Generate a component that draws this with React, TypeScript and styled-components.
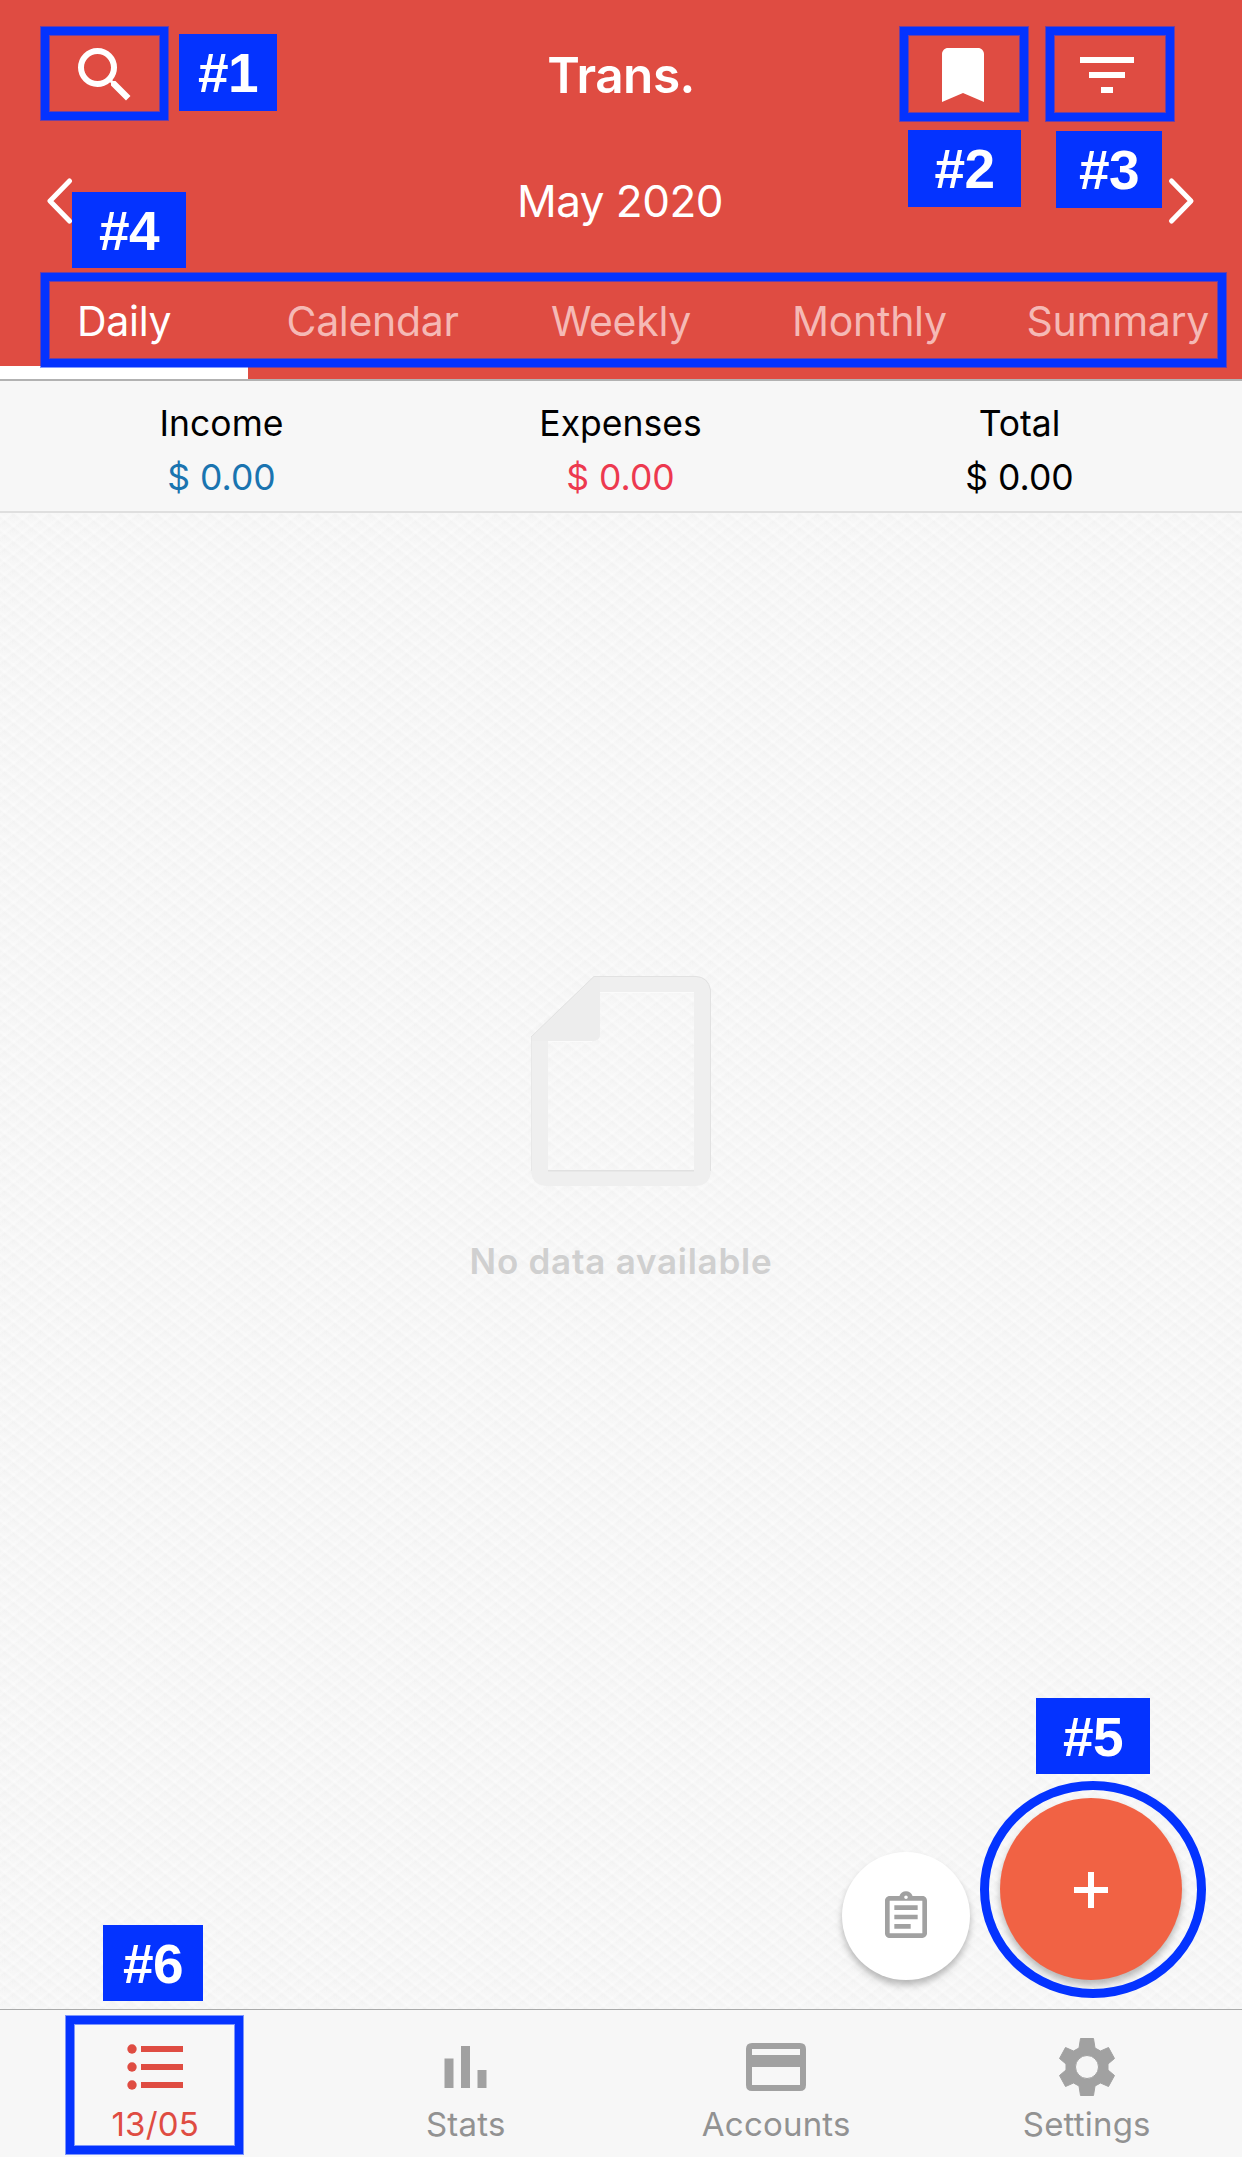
import React from "react";
import styled, { createGlobalStyle, css } from "styled-components";
import {
  MdSearch,
  MdBookmark,
  MdFilterList,
  MdOutlineAssignment,
} from "react-icons/md";

const red = "#df4c42";
const blue = "#0433ff";
const blueEdge = "rgba(4, 51, 255, 0.5)";
const grey = "#a1a1a1";

const GlobalStyle = createGlobalStyle`
  *, *::before, *::after { box-sizing: border-box; }
  body { margin: 0; background: #f7f7f7; }
`;

const Screen = styled.div`
  position: relative;
  width: 1242px;
  height: 2157px;
  display: flex;
  flex-direction: column;
  overflow: hidden;
  font-family: Inter, Roboto, "Liberation Sans", sans-serif;
  background: #f7f7f7;
`;

const Header = styled.header`
  display: flex;
  flex-direction: column;
  height: 381px;
  background: ${red};
  border-bottom: 2px solid #b2b2b2;
  color: #fff;
`;

const TitleBar = styled.div`
  display: grid;
  grid-template-columns: 1fr auto 1fr;
  align-items: center;
  height: 150px;
  padding: 0 69px;
`;

const Title = styled.h1`
  margin: 0;
  font-size: 49.5px;
  font-weight: 600;
  letter-spacing: -0.5px;
  line-height: 60px;
`;

const BarIcons = styled.div<{ $end?: boolean }>`
  display: flex;
  gap: 72px;
  justify-content: ${(p) => (p.$end ? "flex-end" : "flex-start")};
  padding-right: ${(p) => (p.$end ? 30 : 0)}px;
  svg {
    display: block;
    width: 72px;
    height: 72px;
  }
`;

const MonthBar = styled.div`
  display: flex;
  align-items: center;
  justify-content: space-between;
  height: 102px;
  padding: 0 47px 0 45px;
`;

const Month = styled.div`
  font-size: 44px;
  line-height: 54px;
  letter-spacing: -0.5px;
`;

const Tabs = styled.nav`
  display: grid;
  grid-template-columns: repeat(5, 1fr);
  flex: 1;
`;

const Tab = styled.a<{ $active?: boolean }>`
  display: flex;
  justify-content: center;
  padding-top: 44px;
  font-size: 41px;
  line-height: 50px;
  letter-spacing: -0.3px;
  white-space: nowrap;
  color: ${(p) => (p.$active ? "#fff" : "#f5b9b5")};
  ${(p) =>
    p.$active &&
    css`
      border-bottom: 13px solid #fff;
    `}
`;

const Summary = styled.section`
  display: grid;
  grid-template-columns: repeat(3, 1fr);
  height: 132px;
  padding: 16px 23px 0 22px;
  border-bottom: 2px solid #dfdfdf;
  text-align: center;
  font-size: 35.5px;
  line-height: 54px;
  color: #000;
`;

const Amount = styled.div<{ $color: string }>`
  color: ${(p) => p.$color};
`;

const Content = styled.main`
  flex: 1;
  display: flex;
  flex-direction: column;
  align-items: center;
  padding-top: 463px;
  background-color: #f6f6f6;
  background-image: repeating-linear-gradient(
      38deg,
      rgba(255, 255, 255, 0.32) 0 1px,
      rgba(255, 255, 255, 0.08) 2.5px 5px,
      rgba(0, 0, 0, 0.008) 9px,
      rgba(255, 255, 255, 0.32) 11px
    ),
    repeating-linear-gradient(
      -38deg,
      rgba(255, 255, 255, 0.28) 0 1px,
      rgba(255, 255, 255, 0.04) 2.5px 5px,
      rgba(0, 0, 0, 0.008) 9px,
      rgba(255, 255, 255, 0.28) 11px
    );
`;

const EmptyText = styled.p`
  margin: 51px 0 0;
  font-size: 35px;
  font-weight: 600;
  line-height: 48px;
  letter-spacing: 0.75px;
  color: #d0d0d0;
`;

const BottomNav = styled.nav`
  display: grid;
  grid-template-columns: repeat(4, 1fr);
  height: 148px;
  border-top: 1px solid #aaabab;
  background: #f7f7f7;
`;

const NavItem = styled.a<{ $active?: boolean }>`
  display: flex;
  flex-direction: column;
  align-items: center;
  padding-top: 21px;
  color: ${(p) => (p.$active ? red : grey)};
  svg {
    display: block;
    width: 72px;
    height: 72px;
  }
`;

const NavLabel = styled.span<{ $active?: boolean }>`
  font-size: 33px;
  line-height: 42px;
  letter-spacing: 0.2px;
  color: ${(p) => (p.$active ? red : "#929292")};
`;

const FloatingActions = styled.div`
  position: absolute;
  right: 60px;
  bottom: 177px;
  display: flex;
  align-items: flex-end;
  gap: 30px;
`;

const RoundButton = styled.button<{ $size: number; $bg: string; $fg: string }>`
  display: flex;
  align-items: center;
  justify-content: center;
  width: ${(p) => p.$size}px;
  height: ${(p) => p.$size}px;
  padding: 2px 0 0;
  border: 0;
  border-radius: 50%;
  background: ${(p) => p.$bg};
  color: ${(p) => p.$fg};
  box-shadow: 0 5px 7px rgba(0, 0, 0, 0.26);
`;

type Box = { $x: number; $y: number; $w: number; $h: number };

const Outline = styled.div<Box>`
  position: absolute;
  left: ${(p) => p.$x}px;
  top: ${(p) => p.$y}px;
  width: ${(p) => p.$w}px;
  height: ${(p) => p.$h}px;
  border: 8px solid ${blue};
  box-shadow: 0 0 0 1px ${blueEdge}, inset 0 0 0 1px ${blueEdge};
  pointer-events: none;
`;

const Ring = styled.div<Box>`
  position: absolute;
  left: ${(p) => p.$x}px;
  top: ${(p) => p.$y}px;
  width: ${(p) => p.$w}px;
  height: ${(p) => p.$h}px;
  border: 9px solid ${blue};
  border-radius: 50%;
  pointer-events: none;
`;

const Tag = styled.div<Box>`
  position: absolute;
  left: ${(p) => p.$x}px;
  top: ${(p) => p.$y}px;
  width: ${(p) => p.$w}px;
  height: ${(p) => p.$h}px;
  background: ${blue};
  color: #fff;
  font: 700 55px/79px "Liberation Sans", Arial, sans-serif;
  letter-spacing: -0.5px;
  text-align: center;
`;

const Chevron = ({ flip }: { flip?: boolean }) => (
  <svg width="28" height="48" viewBox="0 0 28 48" fill="none">
    <path
      d={flip ? "M4.500 4L24 24L4.500 44" : "M24.500 4L5 24L24.500 44"}
      stroke="currentColor"
      strokeWidth="5"
      strokeLinecap="round"
      strokeLinejoin="round"
    />
  </svg>
);

const EmptyDocument = () => (
  <svg width="180" height="210" viewBox="0 0 180 210">
    <path
      fillRule="evenodd"
      fill="#efefef"
      d="M63 0H165Q180 2 180 16V195Q179 209 165 210H15Q1 209 0 195V61ZM69 16V58Q69 65 61 65H17V195H163V16Z"
    />
    <path fill="#ededed" d="M63 0H69V58Q69 65 61 65H0V61Z" />
    <path d="M0 195V61L63 .5H165Q177 1 179.5 14V195" fill="none" stroke="#e2e2e2" />
    <path d="M17 194.7H163" stroke="#e1e1e1" strokeWidth="1.6" />
    <path d="M17 65.5H61M69 16.5H163" stroke="#fbfbfb" />
  </svg>
);

const ListIcon = () => (
  <svg viewBox="0 0 72 72" fill="currentColor">
    {[18, 36, 54].map((y) => (
      <g key={y}>
        <circle cx="13" cy={y} r="4.700" />
        <rect x="22" y={y - 3} width="42" height="6" />
      </g>
    ))}
  </svg>
);

const StatsIcon = () => (
  <svg viewBox="0 0 72 72" fill="currentColor">
    <path d="M14.500 27.500h9V57h-9zM31 15h9v42h-9zM47.500 39h9v18h-9z" />
  </svg>
);

const CardIcon = () => (
  <svg viewBox="0 0 72 72" fill="currentColor">
    <path
      fillRule="evenodd"
      d="M12 12H60Q66 12 66 18V54Q66 60 60 60H12Q6 60 6 54V18Q6 12 12 12ZM12 18V24H60V18ZM12 36V54H60V36Z"
    />
  </svg>
);

const GearIcon = () => (
  <svg viewBox="0 0 72 72" fill="currentColor">
    <path
      fillRule="evenodd"
      stroke="currentColor"
      strokeWidth="1"
      strokeLinejoin="round"
      d="M29.500 7.500H42.500L44 17L49.500 20L57.500 16.500L63.500 27.500L57 33V39L63.500 44.500L57.500 55.500L49.500 52L44 55L42.500 64.500H29.500L28 55L22.500 52L14.500 55.500L8.500 44.500L15 39V33L8.500 27.500L14.500 16.500L22.500 20L28 17ZM36 24.500A11.500 11.500 0 1 0 36 47.500A11.500 11.500 0 1 0 36 24.500Z"
    />
  </svg>
);

const tabs = ["Daily", "Calendar", "Weekly", "Monthly", "Summary"];

const totals = [
  { label: "Income", color: "#1a74b0" },
  { label: "Expenses", color: "#ed394f" },
  { label: "Total", color: "#000" },
];

const navItems = [
  { label: "13/05", icon: <ListIcon /> },
  { label: "Stats", icon: <StatsIcon /> },
  { label: "Accounts", icon: <CardIcon /> },
  { label: "Settings", icon: <GearIcon /> },
];

export default function App() {
  return (
    <Screen>
      <GlobalStyle />
      <Header>
        <TitleBar>
          <BarIcons>
            <MdSearch />
          </BarIcons>
          <Title>Trans.</Title>
          <BarIcons $end>
            <MdBookmark />
            <MdFilterList />
          </BarIcons>
        </TitleBar>
        <MonthBar>
          <Chevron />
          <Month>May 2020</Month>
          <Chevron flip />
        </MonthBar>
        <Tabs>
          {tabs.map((t, i) => (
            <Tab key={t} $active={i === 0}>
              {t}
            </Tab>
          ))}
        </Tabs>
      </Header>

      <Summary>
        {totals.map((t) => (
          <div key={t.label}>
            <div>{t.label}</div>
            <Amount $color={t.color}>$ 0.00</Amount>
          </div>
        ))}
      </Summary>

      <Content>
        <EmptyDocument />
        <EmptyText>No data available</EmptyText>
      </Content>

      <BottomNav>
        {navItems.map((n, i) => (
          <NavItem key={n.label} $active={i === 0}>
            {n.icon}
            <NavLabel $active={i === 0}>{n.label}</NavLabel>
          </NavItem>
        ))}
      </BottomNav>

      <FloatingActions>
        <RoundButton $size={128} $bg="#fff" $fg={grey}>
          <MdOutlineAssignment size={56} />
        </RoundButton>
        <RoundButton $size={182} $bg="#f16244" $fg="#fff">
          <svg width="36" height="36" viewBox="0 0 36 36">
            <path d="M18 0V36M1 18H35" stroke="currentColor" strokeWidth="6" />
          </svg>
        </RoundButton>
      </FloatingActions>

      <Outline $x={41} $y={27} $w={127} $h={93} />
      <Outline $x={900} $y={27} $w={128} $h={94} />
      <Outline $x={1046} $y={27} $w={128} $h={94} />
      <Outline $x={41} $y={273} $w={1185} $h={94} />
      <Outline $x={66} $y={2016} $w={177} $h={138} />
      <Ring $x={980} $y={1781} $w={226} $h={217} />

      <Tag $x={179} $y={34} $w={98} $h={77}>#1</Tag>
      <Tag $x={908} $y={130} $w={113} $h={77}>#2</Tag>
      <Tag $x={1056} $y={131} $w={106} $h={77}>#3</Tag>
      <Tag $x={72} $y={192} $w={114} $h={76}>#4</Tag>
      <Tag $x={1036} $y={1698} $w={114} $h={76}>#5</Tag>
      <Tag $x={103} $y={1925} $w={100} $h={76}>#6</Tag>
    </Screen>
  );
}
